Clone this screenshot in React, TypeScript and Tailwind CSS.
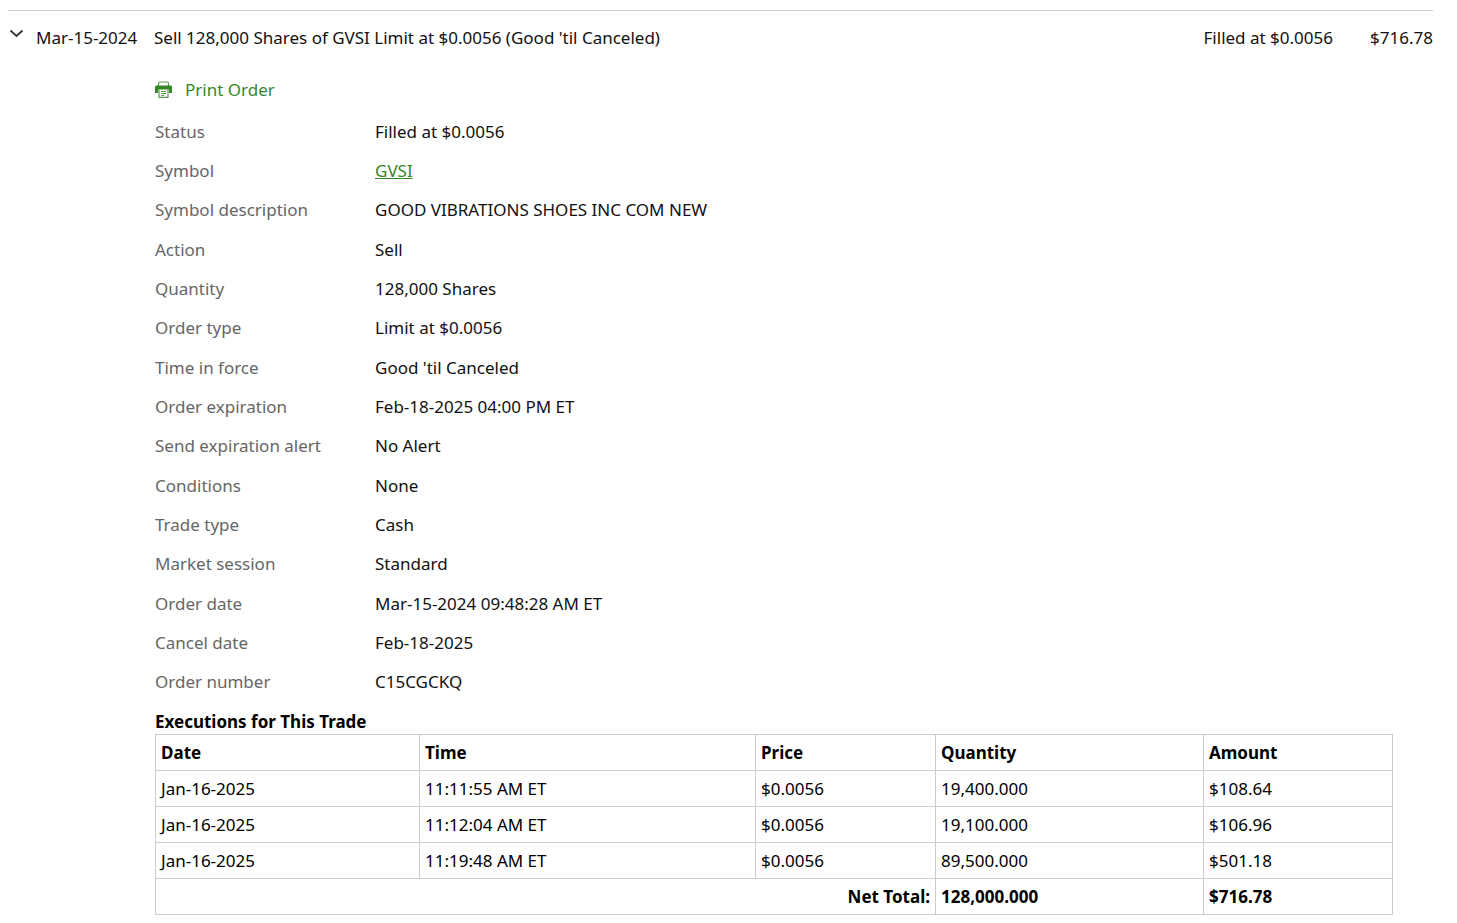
import React, { useState } from "react";

const details: { label: string; value: string; link?: boolean }[] = [
  { label: "Status", value: "Filled at $0.0056" },
  { label: "Symbol", value: "GVSI", link: true },
  { label: "Symbol description", value: "GOOD VIBRATIONS SHOES INC COM NEW" },
  { label: "Action", value: "Sell" },
  { label: "Quantity", value: "128,000 Shares" },
  { label: "Order type", value: "Limit at $0.0056" },
  { label: "Time in force", value: "Good 'til Canceled" },
  { label: "Order expiration", value: "Feb-18-2025 04:00 PM ET" },
  { label: "Send expiration alert", value: "No Alert" },
  { label: "Conditions", value: "None" },
  { label: "Trade type", value: "Cash" },
  { label: "Market session", value: "Standard" },
  { label: "Order date", value: "Mar-15-2024 09:48:28 AM ET" },
  { label: "Cancel date", value: "Feb-18-2025" },
  { label: "Order number", value: "C15CGCKQ" },
];

const executions = [
  ["Jan-16-2025", "11:11:55 AM ET", "$0.0056", "19,400.000", "$108.64"],
  ["Jan-16-2025", "11:12:04 AM ET", "$0.0056", "19,100.000", "$106.96"],
  ["Jan-16-2025", "11:19:48 AM ET", "$0.0056", "89,500.000", "$501.18"],
];

function PrinterIcon() {
  return (
    <svg aria-hidden="true" className="h-[18px] w-[18px]" viewBox="0 0 18 18" fill="none">
      <path d="M3.500 5V2.500Q3.500 1 5 1H12Q13.500 1 13.500 2.500V5" stroke="#5a9c4e" strokeWidth="1.2" />
      <path
        d="M1.500 4.500H15.500Q17 4.500 17 6V12H14V8.500H3V12H0V6Q0 4.500 1.500 4.500Z"
        fill="#368727"
      />
      <path d="M4 8.500V16.300H13V8.500" stroke="#5a9c4e" strokeWidth="1.2" />
      <path d="M6 10.500H11M6 12.500H11M6 14.500H9" stroke="#5a9c4e" strokeWidth="1" />
    </svg>
  );
}

export default function App() {
  const [open, setOpen] = useState(true);
  return (
    <main className="bg-white pt-[10px] pr-6 pb-2 pl-2 font-['Noto_Sans',sans-serif] text-[17px] leading-6 text-[#111]">
      <section className="border-t border-[#ccc]">
        <header className="flex items-center pt-[15px]">
          <button
            type="button"
            aria-label="Toggle order details"
            aria-expanded={open}
            onClick={() => setOpen(!open)}
            className="flex h-6 w-7 shrink-0 items-start pt-[3px]"
          >
            <svg aria-hidden="true" className="h-[9px] w-[17px]" viewBox="0 0 17 9" fill="none">
              <path d="M2.500 1.500L8.500 7L14.500 1.500" stroke="#333" strokeWidth="1.7" />
            </svg>
          </button>
          <span className="w-[118px] shrink-0">Mar-15-2024</span>
          <h1 className="flex-1">Sell 128,000 Shares of GVSI Limit at $0.0056 (Good 'til Canceled)</h1>
          <span>Filled at $0.0056</span>
          <span className="w-[100px] text-right">$716.78</span>
        </header>
        {open && (
          <div className="pt-7 pr-10 pl-[147px]">
            <button type="button" className="flex items-center gap-3 text-[#368727]">
              <PrinterIcon />
              Print Order
            </button>
            <dl className="mt-[10px] flex min-h-[590px] flex-col">
              {details.map((d) => (
                <div key={d.label} className="flex flex-1 items-center">
                  <dt className="w-[220px] shrink-0 text-[#666]">{d.label}</dt>
                  <dd>
                    {d.link ? (
                      <a href="#gvsi" className="text-[#368727] underline">
                        {d.value}
                      </a>
                    ) : (
                      d.value
                    )}
                  </dd>
                </div>
              ))}
            </dl>
            <table className="mt-2 w-full table-fixed border-collapse text-left text-black">
              <caption className="text-left font-bold">Executions for This Trade</caption>
              <colgroup>
                <col className="w-[264px]" />
                <col className="w-[336px]" />
                <col className="w-[180px]" />
                <col className="w-[268px]" />
                <col />
              </colgroup>
              <thead>
                <tr className="h-9">
                  {["Date", "Time", "Price", "Quantity", "Amount"].map((h) => (
                    <th key={h} scope="col" className="border border-[#ccc] px-[5px] font-bold">
                      {h}
                    </th>
                  ))}
                </tr>
              </thead>
              <tbody>
                {executions.map((row) => (
                  <tr key={row[1]} className="h-9">
                    {row.map((cell, i) => (
                      <td key={i} className="border border-[#ccc] px-[5px]">
                        {cell}
                      </td>
                    ))}
                  </tr>
                ))}
              </tbody>
              <tfoot>
                <tr className="h-9 font-bold">
                  <th scope="row" colSpan={3} className="border border-[#ccc] px-[5px] text-right">
                    Net Total:
                  </th>
                  <td className="border border-[#ccc] px-[5px]">128,000.000</td>
                  <td className="border border-[#ccc] px-[5px]">$716.78</td>
                </tr>
              </tfoot>
            </table>
          </div>
        )}
      </section>
    </main>
  );
}
